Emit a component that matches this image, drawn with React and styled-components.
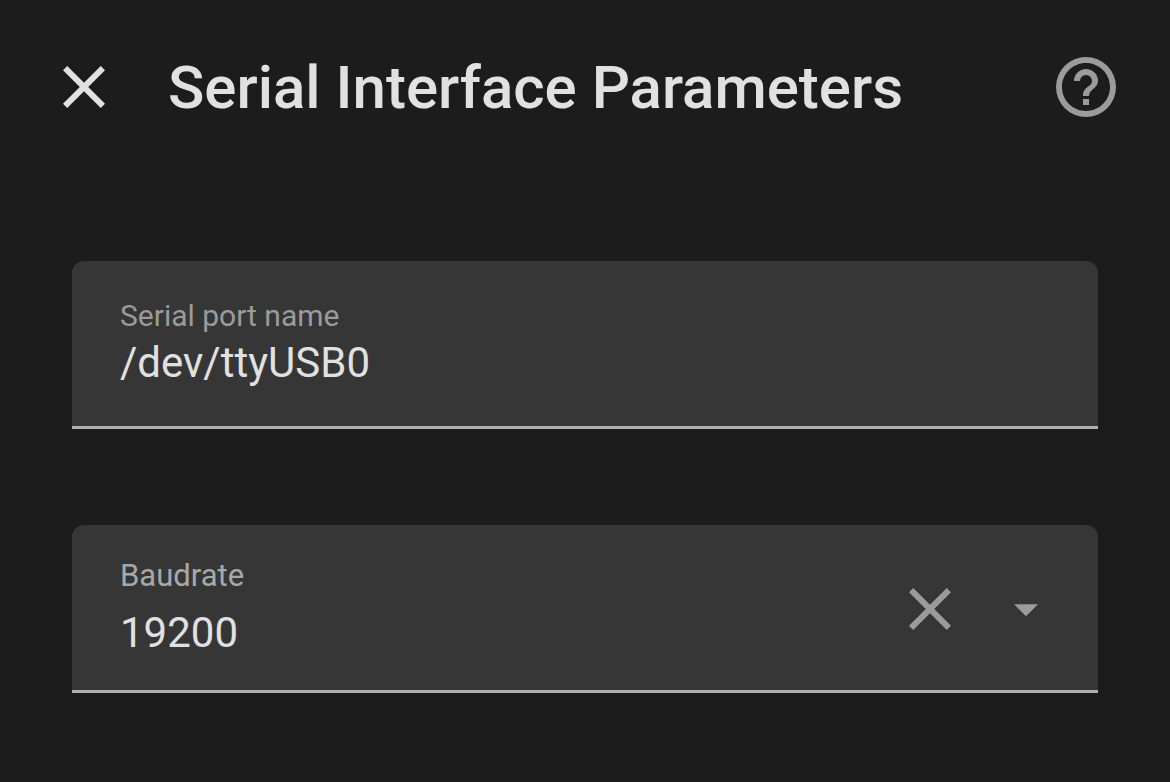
import React, { useState } from "react";
import styled, { createGlobalStyle } from "styled-components";

const GlobalStyle = createGlobalStyle`
  * {
    box-sizing: border-box;
  }
  body {
    margin: 0;
    background: #1c1c1c;
    color: #e1e1e1;
    font-family: Roboto, sans-serif;
  }
`;

const Dialog = styled.main`
  display: flex;
  flex-direction: column;
  min-height: 100vh;
`;
const Header = styled.header`
  display: flex;
  align-items: center;
  padding: 51px 48px 0;
`;
const Title = styled.h1`
  flex: 1;
  margin: 0 0 0 48px;
  padding-top: 2px;
  font-size: 60px;
  font-weight: 500;
  line-height: 70px;
`;
const IconButton = styled.button`
  display: flex;
  justify-content: center;
  align-items: center;
  width: 72px;
  height: 72px;
  padding: 0;
  border: none;
  background: none;
  color: ${(props) => props.$color || "#9b9b9b"};
  cursor: pointer;
  & svg {
    width: 72px;
    height: 72px;
    fill: currentColor;
  }
`;
const Form = styled.form`
  display: flex;
  flex-direction: column;
  gap: 96px;
  padding: 138px 72px 0;
`;
const Field = styled.div`
  display: flex;
  align-items: flex-start;
  padding: 0 36px 0 48px;
  border-radius: 12px 12px 0 0;
  background: #363636;
  box-shadow: inset 0 -3px #b0b0b0;
`;
const FieldText = styled.div`
  display: flex;
  flex-direction: column;
  flex: 1;
  gap: ${(props) => props.$gap}px;
  min-height: 168px;
  padding-top: ${(props) => props.$top}px;
  & label {
    color: ${(props) => props.$labelColor};
    font-size: ${(props) => props.$labelSize}px;
    line-height: 36px;
  }
`;
const Input = styled.input`
  width: 100%;
  height: 48px;
  padding: 0;
  border: none;
  outline: none;
  background: none;
  color: #e1e1e1;
  font-family: inherit;
  font-size: 42px;
  line-height: 48px;
`;
const Actions = styled.div`
  display: flex;
  align-self: center;
  gap: 24px;
`;

const CloseIcon = () => (
  <svg viewBox="0 0 24 24" aria-hidden="true">
    <path d="M19,6.41L17.59,5L12,10.59L6.41,5L5,6.41L10.59,12L5,17.59L6.41,19L12,13.41L17.59,19L19,17.59L13.41,12L19,6.41Z" />
  </svg>
);
const HelpIcon = () => (
  <svg viewBox="0 0 24 24" aria-hidden="true">
    <path d="M11,18H13V16H11V18M12,2A10,10 0 0,0 2,12A10,10 0 0,0 12,22A10,10 0 0,0 22,12A10,10 0 0,0 12,2M12,20C7.59,20 4,16.41 4,12C4,7.59 7.59,4 12,4C16.41,4 20,7.59 20,12C20,16.41 16.41,20 12,20M12,6A4,4 0 0,0 8,10H10A2,2 0 0,1 12,8A2,2 0 0,1 14,10C14,12 11,11.75 11,15H13C13,12.75 16,12.5 16,10A4,4 0 0,0 12,6Z" />
  </svg>
);
const MenuDownIcon = () => (
  <svg viewBox="0 0 24 24" aria-hidden="true">
    <path d="M8,10.4L12,14.4L16,10.4H8Z" />
  </svg>
);

function App() {
  const [port, setPort] = useState("/dev/ttyUSB0");
  const [baudrate, setBaudrate] = useState("19200");

  return (
    <Dialog>
      <GlobalStyle />
      <Header>
        <IconButton type="button" aria-label="Close" $color="#e1e1e1">
          <CloseIcon />
        </IconButton>
        <Title>Serial Interface Parameters</Title>
        <IconButton type="button" aria-label="Help">
          <HelpIcon />
        </IconButton>
      </Header>
      <Form>
        <Field>
          <FieldText $top={37} $gap={5} $labelSize={30} $labelColor="#9b9b9b">
            <label htmlFor="port">Serial port name</label>
            <Input
              id="port"
              value={port}
              onChange={(e) => setPort(e.target.value)}
            />
          </FieldText>
        </Field>
        <Field>
          <FieldText $top={33} $gap={15} $labelSize={31} $labelColor="#a8a8a8">
            <label htmlFor="baudrate">Baudrate</label>
            <Input
              id="baudrate"
              value={baudrate}
              onChange={(e) => setBaudrate(e.target.value)}
            />
          </FieldText>
          <Actions>
            <IconButton
              type="button"
              aria-label="Clear"
              onClick={() => setBaudrate("")}
            >
              <CloseIcon />
            </IconButton>
            <IconButton type="button" aria-label="Show baudrates">
              <MenuDownIcon />
            </IconButton>
          </Actions>
        </Field>
      </Form>
    </Dialog>
  );
}
export default App;
